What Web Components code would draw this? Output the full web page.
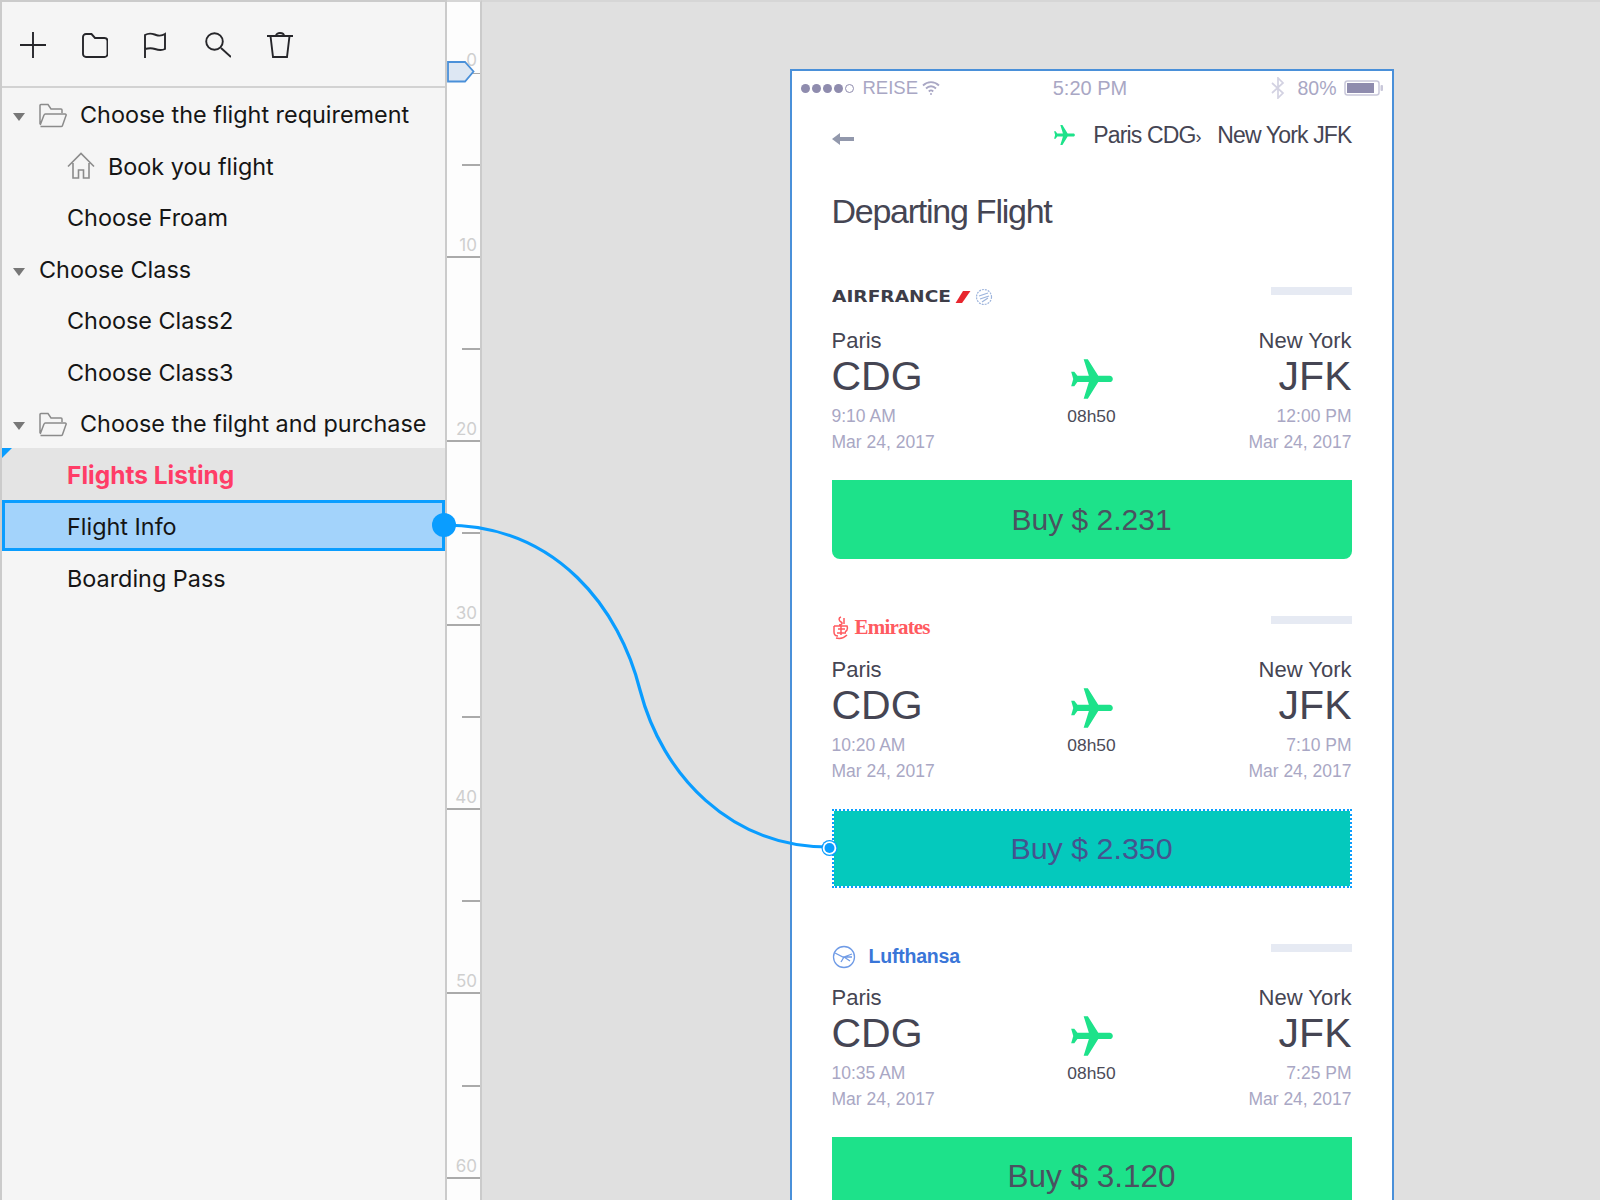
<!DOCTYPE html>
<html>
<head>
<meta charset="utf-8">
<title>Flight prototype</title>
<style>
  html, body { margin: 0; height: 100%; overflow: hidden; background: #e0e0e0; }
</style>
</head>
<body>
<app-shell>
  <side-panel slot="side">
    <tree-row level="0" icon="folder" arrow>Choose the flight requirement</tree-row>
    <tree-row level="1" icon="home">Book you flight</tree-row>
    <tree-row level="1">Choose Froam</tree-row>
    <tree-row level="0" arrow>Choose Class</tree-row>
    <tree-row level="1">Choose Class2</tree-row>
    <tree-row level="1">Choose Class3</tree-row>
    <tree-row level="0" icon="folder" arrow>Choose the filght and purchase</tree-row>
    <tree-row level="1" state="active">Flights Listing</tree-row>
    <tree-row level="1" state="selected">Flight Info</tree-row>
    <tree-row level="1">Boarding Pass</tree-row>
  </side-panel>
  <ruler-bar slot="ruler"></ruler-bar>
  <phone-frame slot="canvas">
    <flight-card airline="airfrance" dep="9:10 AM" arr="12:00 PM" price="Buy $ 2.231" style="--buy-size: 30px"></flight-card>
    <flight-card airline="emirates" dep="10:20 AM" arr="7:10 PM" price="Buy $ 2.350" style="--buy-size: 30.400px" picked></flight-card>
    <flight-card airline="lufthansa" dep="10:35 AM" arr="7:25 PM" price="Buy $ 3.120" style="--buy-size: 31.500px"></flight-card>
  </phone-frame>
</app-shell>

<script>
const PLANE = 'M21 16v-2l-8-5V3.5c0-.83-.67-1.5-1.5-1.5S10 2.67 10 3.5V9l-8 5v2l8-2.5V19l-2 1.5V22l3.5-1 3.5 1v-1.5L13 19v-5.5l8 2.5z';

class AppShell extends HTMLElement {
  connectedCallback() {
    this.attachShadow({ mode: 'open' }).innerHTML = `
      <style>
        :host { display: flex; position: relative; width: 1600px; height: 1200px; overflow: hidden; background: #e0e0e0; }
        .canvas { flex: 1; padding: 67px 0 0 307.500px; border-top: 2px solid #d6d6d6; box-sizing: border-box; }
        svg { position: absolute; left: 0; top: 0; pointer-events: none; }
      </style>
      <slot name="side"></slot>
      <slot name="ruler"></slot>
      <div class="canvas"><slot name="canvas"></slot></div>
      <svg width="1600" height="1200" viewBox="0 0 1600 1200">
        <path d="M444 525 C558 525 620 610 640 690 C662 775 730 847 829 847" fill="none" stroke="#0a9dff" stroke-width="3.200"/>
        <circle cx="444" cy="525" r="12" fill="#0a9dff"/>
        <circle cx="829.500" cy="848" r="8" fill="#0a9dff"/>
        <circle cx="829.500" cy="848" r="6.800" fill="#fff"/>
        <circle cx="829.500" cy="848" r="5" fill="#0a9dff"/>
      </svg>`;
  }
}

class SidePanel extends HTMLElement {
  connectedCallback() {
    this.attachShadow({ mode: 'open' }).innerHTML = `
      <style>
        :host { display: block; box-sizing: border-box; width: 447px; height: 1200px; background: #f5f5f5;
          border: 2px solid #cbcbcb; border-bottom: 0; }
        .tools { display: flex; align-items: center; gap: 35.700px; height: 85.500px; padding: 3px 0 0 18px; box-sizing: border-box;
          border-bottom: 2px solid #d2d2d2; }
        svg { width: 26px; height: 26px; fill: none; stroke: #26262a; stroke-width: 1.900; flex: none; }
      </style>
      <div class="tools">
        <svg viewBox="0 0 26 26"><path d="M0 13H26M13 0V26"/></svg>
        <svg viewBox="0 0 26 26"><path d="M1 5a3 3 0 0 1 3-3h5.500l3.500 4h9.500a3 3 0 0 1 3 3v13a3 3 0 0 1-3 3H4a3 3 0 0 1-3-3z"/></svg>
        <svg viewBox="0 0 26 26"><path d="M2 26V3C7 0 10 2 13 3c3 1 6 1 9-1V17c-4 2-7 1-10 0s-6-1-10 0"/></svg>
        <svg viewBox="0 0 26 26"><circle cx="9.500" cy="9.500" r="8.300"/><path d="M16 16l10 9"/></svg>
        <svg viewBox="0 0 26 26"><path d="M0 4H26M9 4c0-4 8-4 8 0M3.500 4l2.500 21h14l2.500-21"/></svg>
      </div>
      <slot></slot>`;
  }
}

class TreeRow extends HTMLElement {
  connectedCallback() {
    const level = this.getAttribute('level');
    const icon = this.getAttribute('icon');
    const folder = `<svg class="ico" width="28" height="26" viewBox="0 0 28 26"><path d="M1 22V3.500a1 1 0 0 1 1-1h7l3 4.500h10a1 1 0 0 1 1 1v3M1.500 24.500h20.500a1.500 1.500 0 0 0 1.500-1l3.500-10a1 1 0 0 0-1-1.500H6.500a1.500 1.500 0 0 0-1.500 1L1.200 23" fill="none" stroke="#8b8b8b" stroke-width="1.500"/></svg>`;
    const home = `<svg class="ico" width="28" height="28" viewBox="0 0 28 28"><path d="M1 14.500L14 1.500l13 13M6 11v15h5.500v-8h5v8H22V11" fill="none" stroke="#8b8b8b" stroke-width="1.600"/></svg>`;
    this.attachShadow({ mode: 'open' }).innerHTML = `
      <style>
        :host { display: block; height: 51.500px; font: 400 23.400px/1 Inter, "Noto Sans", sans-serif; color: #151515; }
        .row { position: relative; box-sizing: border-box; height: 100%; display: flex; align-items: center; gap: 13px;
          padding: 3px 0 0 ${level === '1' ? 65 : 37}px; }
        :host([state="active"]) .row { background: #e4e4e4; color: #ff3d67; font-weight: 700; font-size: 24.500px; }
        :host([state="active"]) .row::before { content: ''; position: absolute; left: 0; top: 0;
          border-style: solid; border-width: 10px 10px 0 0; border-color: #0a9dff transparent transparent transparent; }
        :host([state="selected"]) .row { background: #a3d3fb; outline: 3px solid #0a9dff; outline-offset: -3px; }
        .arrow { position: absolute; left: 11px; top: 50%; margin-top: 0; border-style: solid;
          border-width: 8px 6.500px 0; border-color: #777 transparent transparent; }
        .ico { flex: none; }
      </style>
      <div class="row">
        ${this.hasAttribute('arrow') ? '<span class="arrow"></span>' : ''}
        ${icon === 'folder' ? folder : icon === 'home' ? home : ''}
        <span><slot></slot></span>
      </div>`;
  }
}

class RulerBar extends HTMLElement {
  connectedCallback() {
    let ticks = '';
    for (let i = 0; i < 13; i++) {
      const major = i % 2 === 1;
      ticks += `<div class="seg ${major ? 'major' : ''}">${major ? `<span>${(i + 1) * 5}</span>` : ''}</div>`;
    }
    this.attachShadow({ mode: 'open' }).innerHTML = `
      <style>
        :host { display: block; position: relative; box-sizing: border-box; width: 35px; height: 1200px; background: #fdfdfd;
          border-top: 2px solid #d6d6d6; border-right: 2px solid #cbcbcb; flex: none;
          font: 400 17px/1 Inter, sans-serif; color: #cfcfcf; overflow: hidden; }
        .zero { height: 71.500px; box-sizing: border-box; position: relative; }
        .zero::after { content: ''; position: absolute; right: 0; bottom: 0; width: 8px; border-bottom: 1.500px solid #aaa; }
        .zero span { position: absolute; right: 3px; bottom: 5px; }
        .seg { height: 92.100px; box-sizing: border-box; position: relative; }
        .seg::after { content: ''; position: absolute; right: 0; bottom: 0; width: 18px; border-bottom: 2px solid #aaa; }
        .seg.major::after { width: 100%; }
        .seg span { position: absolute; right: 3px; bottom: 4px; }
        svg { position: absolute; left: 0; top: 59px; }
      </style>
      <div class="zero"><span>0</span></div>
      ${ticks}
      <svg width="29" height="22" viewBox="0 0 29 22"><path d="M1 1H18L26.500 10.500L18 20.500H1Z" fill="#dde7f3" stroke="#4a90d9" stroke-width="1.800"/></svg>`;
  }
}

class PhoneFrame extends HTMLElement {
  connectedCallback() {
    this.attachShadow({ mode: 'open' }).innerHTML = `
      <style>
        :host { display: block; box-sizing: border-box; width: 604px; height: 1200px; background: #fff; border: 2px solid #4a90d9;
          padding: 0 40px; font-family: "Liberation Sans", Arial, sans-serif; color: #454553; }
        .status { position: relative; display: flex; align-items: center; height: 34px; margin: 0 -30px; font-size: 18.500px; color: #a9a7c4; }
        .dots { display: flex; gap: 2px; margin-right: 9px; margin-left: -1px; }
        .dots i { width: 9px; height: 9px; border-radius: 50%; background: #8f8cae; box-sizing: border-box; }
        .dots i:last-child { background: #fff; border: 1px solid #8f8cae; }
        .time { position: absolute; left: 0; right: 3px; text-align: center; font-size: 20px; }
        .right { margin-left: auto; margin-right: -2px; display: flex; align-items: center; gap: 7px; }
        .nav { display: flex; align-items: center; height: 44px; margin-top: 8px; font-size: 23px; letter-spacing: -.850px; }
        .back { margin-top: 7px; }
        .plane { margin-left: auto; transform: rotate(90deg); fill: #1de28a; }
        .route { margin-left: 16px; }
        .route b { font-weight: 400; font-size: 18px; }
        h1 { margin: 32px 0 0; font-weight: 400; font-size: 34px; line-height: 44px; letter-spacing: -1.250px; }
        .list { margin-top: 47px; }
      </style>
      <div class="status">
        <span class="dots"><i></i><i></i><i></i><i></i><i></i></span>
        <span>REISE</span>
        <svg width="18" height="16" viewBox="0 0 18 16" style="margin-left:4px" fill="none" stroke="#a9a7c4" stroke-width="1.800"><path d="M1 5.500c4.500-4.500 11.500-4.500 16 0M4 8.500c3-3 7-3 10 0M6.800 11.500c1.300-1.300 3.100-1.300 4.400 0"/><circle cx="9" cy="14" r="1" fill="#a9a7c4" stroke="none"/></svg>
        <span class="time">5:20 PM</span>
        <span class="right">
          <svg width="14" height="22" viewBox="0 0 14 22" fill="none" stroke="#d3d2e2" stroke-width="1.700"><path d="M1 6l11 10-5 5V1l5 5L1 16"/></svg>
          <span style="margin-left:5px;font-size:19.500px">80%</span>
          <svg width="40" height="16" viewBox="0 0 40 16"><rect x="1" y="1" width="34" height="14" rx="2.500" fill="none" stroke="#c9c8da" stroke-width="1.500"/><rect x="3" y="3" width="27" height="10" fill="#8f8cae"/><rect x="36.500" y="5" width="2.500" height="6" rx="1" fill="#c9c8da"/></svg>
        </span>
      </div>
      <div class="nav">
        <svg class="back" width="22" height="14" viewBox="0 0 22 14"><path d="M0 7L8 1V5H22V9H8V13Z" fill="#9298ac"/></svg>
        <svg class="plane" width="25" height="25" viewBox="0 0 24 24"><path d="${PLANE}"/></svg>
        <span class="route">Paris CDG<b>›</b>&nbsp;&nbsp;&nbsp;New York JFK</span>
      </div>
      <h1>Departing Flight</h1>
      <div class="list"><slot></slot></div>`;
  }
}

class FlightCard extends HTMLElement {
  connectedCallback() {
    const logos = {
      airfrance: `<span class="af">AIRFRANCE</span>
        <svg width="16" height="13" viewBox="0 0 16 14"><path d="M8 0H16L7 13H0Z" fill="#e8262e"/></svg>
        <svg width="18" height="18" viewBox="0 0 18 18" fill="none" stroke="#9db4dc" stroke-width="1.200"><circle cx="9" cy="9" r="7.500" stroke-dasharray="2 1"/><path d="M4 8l9-3M5 11l9-3M7 14l6-4"/></svg>`,
      emirates: `<svg width="18" height="24" viewBox="0 0 18 24" fill="none" stroke="#ff5a5f" stroke-width="1.500"><path d="M9 1c-3 1-2 4 0 5s1 3-2 3M12 2v6M2 10h13c1 3 0 5-2 6M2 10v6c0 3 2 4 4 4M6 13h7M5 17h9M4 22c4 1 8 0 11-3M9 10v9"/></svg>
        <span class="em">Emirates</span>`,
      lufthansa: `<svg width="24" height="24" viewBox="0 0 24 24" fill="none" stroke="#6f9be6" stroke-width="1.300"><circle cx="12" cy="12" r="10.500"/><path d="M3 8l8 4h9M20 9l-8 3-3 5M12 12l6 4" /></svg>
        <span class="lh">Lufthansa</span>`
    };
    const shift = { airfrance: 2, emirates: 4, lufthansa: 5 };
    const airline = this.getAttribute('airline');
    const plane = `<svg class="plane" width="50" height="50" viewBox="0 0 24 24"><path d="${PLANE}"/></svg>`;
    this.attachShadow({ mode: 'open' }).innerHTML = `
      <style>
        :host { display: block; height: 328.500px; }
        .head { display: flex; align-items: center; height: 30px; }
        .logo { display: flex; align-items: center; gap: 4px; padding-top: ${shift[airline] * 2}px; }
        .af { display: inline-block; width: 119px; transform: scaleX(1.240); transform-origin: left center; white-space: nowrap;
          font: 700 15px/1 "DejaVu Sans", sans-serif; color: #3d3d48; }
        .em { font: 700 21px/1 "Liberation Serif", serif; color: #ff5a5f; margin-left: 1px; letter-spacing: -.8px; }
        .lh { font: 700 19.500px/1 "Liberation Sans", sans-serif; color: #3a76d8; margin-left: 9px; letter-spacing: -.2px; }
        .bar { margin-left: auto; width: 81px; height: 8px; background: #e6eaf3; align-self: flex-start; margin-top: 7px; }
        .route { display: grid; grid-template-columns: 1fr auto 1fr; margin-top: 18px; height: 127px; }
        .end:last-child { text-align: right; }
        .city { font-size: 22px; line-height: 26px; }
        .code { font-size: 41px; line-height: 46px; margin-top: -1px; }
        .meta { font-size: 17.500px; line-height: 26px; color: #a9a7c4; margin-top: 4px; }
        .meta + .meta { margin-top: 0; }
        .mid { display: flex; flex-direction: column; align-items: center; padding-top: 27px; font-size: 17.400px; color: #4b4b58; }
        .plane { transform: rotate(90deg); fill: #1de28a; margin-bottom: 1px; }
        .buy { margin-top: 25px; height: 79px; box-sizing: border-box; display: flex; align-items: center; justify-content: center;
          background: #1de28a; border-radius: 0 0 8px 8px; font-size: var(--buy-size, 31px); color: #4a5260; }
        :host([picked]) .buy { background: #04c9bd padding-box; color: #44548f; border-radius: 0; border: 2px dotted #0a9dff; }
      </style>
      <div class="head"><span class="logo">${logos[airline]}</span><span class="bar"></span></div>
      <div class="route">
        <div class="end">
          <div class="city">Paris</div><div class="code">CDG</div>
          <div class="meta">${this.getAttribute('dep')}</div><div class="meta">Mar 24, 2017</div>
        </div>
        <div class="mid">${plane}<span>08h50</span></div>
        <div class="end">
          <div class="city">New York</div><div class="code">JFK</div>
          <div class="meta">${this.getAttribute('arr')}</div><div class="meta">Mar 24, 2017</div>
        </div>
      </div>
      <div class="buy">${this.getAttribute('price')}</div>`;
  }
}

customElements.define('flight-card', FlightCard);
customElements.define('phone-frame', PhoneFrame);
customElements.define('ruler-bar', RulerBar);
customElements.define('tree-row', TreeRow);
customElements.define('side-panel', SidePanel);
customElements.define('app-shell', AppShell);
</script>
</body>
</html>
